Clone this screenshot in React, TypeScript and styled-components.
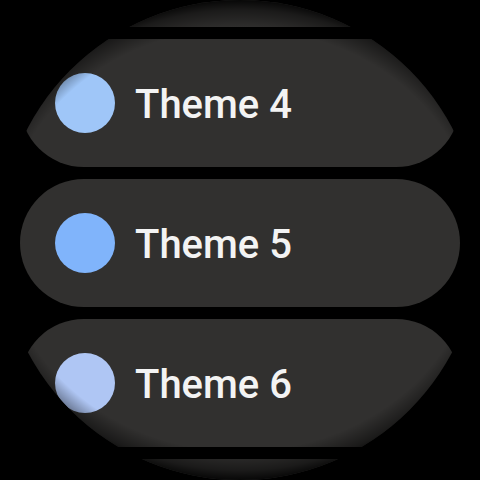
import React from 'react';
import styled, { createGlobalStyle } from 'styled-components';

const GlobalStyle = createGlobalStyle`
  html, body {
    margin: 0;
    padding: 0;
    background: #000;
  }
  body {
    font-family: Roboto, "Noto Sans", "Liberation Sans", sans-serif;
  }
`;

const Screen = styled.div`
  position: relative;
  width: 480px;
  height: 480px;
  border-radius: 50%;
  overflow: hidden;
  background: #000;
`;

const List = styled.div<{ scroll: number }>`
  display: flex;
  flex-direction: column;
  align-items: center;
  gap: 12px;
  margin-top: ${({ scroll }) => -scroll}px;
`;

const Chip = styled.button`
  display: flex;
  align-items: center;
  gap: 20px;
  flex-shrink: 0;
  width: 440px;
  height: 128px;
  padding: 0 0 0 35px;
  border: none;
  border-radius: 64px;
  background: #31302f;
  cursor: pointer;
`;

const Swatch = styled.span<{ color: string }>`
  width: 60px;
  height: 60px;
  border-radius: 50%;
  flex-shrink: 0;
  background: ${({ color }) => color};
`;

const Label = styled.span`
  font-family: Roboto, "Noto Sans", "Liberation Sans", sans-serif;
  font-size: 40px;
  font-weight: 500;
  color: #f3f3f3;
  padding-top: 2px;
`;

const Vignette = styled.div`
  position: absolute;
  inset: 0;
  pointer-events: none;
  background: radial-gradient(
    ellipse 270px 240px at 50% 50%,
    rgba(0, 0, 0, 0) 88%,
    rgba(0, 0, 0, 0.45) 96%,
    rgba(0, 0, 0, 0.85) 100%
  );
`;

// edge items peek in at the top and bottom of the round screen
const themes = [
  { name: 'Theme 3', color: '#a8c4f2', peek: true },
  { name: 'Theme 4', color: '#9fc6f8', peek: false },
  { name: 'Theme 5', color: '#80b4fb', peek: false },
  { name: 'Theme 6', color: '#afc6f4', peek: false },
  { name: 'Theme 7', color: '#8fb8f0', peek: true },
];

export default function App() {
  return (
    <>
      <GlobalStyle />
      <Screen>
        <List scroll={101}>
          {themes.map((t) => (
            <Chip key={t.name} aria-label={t.name}>
              {!t.peek && (
                <>
                  <Swatch color={t.color} />
                  <Label>{t.name}</Label>
                </>
              )}
            </Chip>
          ))}
        </List>
        <Vignette />
      </Screen>
    </>
  );
}
